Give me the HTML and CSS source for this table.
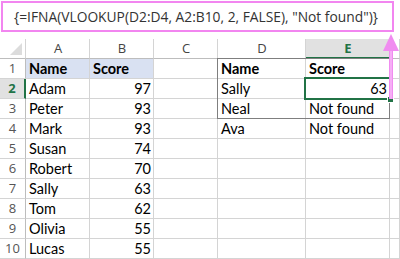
FILE: index.html
```html
<!DOCTYPE html>
<html lang="en">
<head>
    <meta charset="UTF-8" />
    <meta name="viewport" content="width=device-width, initial-scale=1.0" />
    <title>IFNA VLOOKUP</title>
    <link rel="stylesheet" href="styles.css">
</head>
<body>
    <div class="formula-bar">
        <div class="formula-box">{=IFNA(VLOOKUP(D2:D4, A2:B10, 2, FALSE), "Not found")}</div>
    </div>

    <div class="sheet">
        <div class="grid">
            <!-- column headers -->
            <div class="cell corner"><span class="corner-mark"></span></div>
            <div class="cell col-head">A</div>
            <div class="cell col-head">B</div>
            <div class="cell col-head">C</div>
            <div class="cell col-head">D</div>
            <div class="cell col-head active">E</div>
            <div class="cell col-head"></div>

            <div class="cell row-head">1</div>
            <div class="cell head-fill bold">Name</div>
            <div class="cell head-fill bold">Score</div>
            <div class="cell"></div>
            <div class="cell bold">Name</div>
            <div class="cell bold">Score</div>
            <div class="cell"></div>

            <div class="cell row-head active">2</div>
            <div class="cell">Adam</div>
            <div class="cell num">97</div>
            <div class="cell"></div>
            <div class="cell">Sally</div>
            <div class="cell num">63</div>
            <div class="cell"></div>

            <div class="cell row-head">3</div>
            <div class="cell">Peter</div>
            <div class="cell num">93</div>
            <div class="cell"></div>
            <div class="cell">Neal</div>
            <div class="cell">Not found</div>
            <div class="cell"></div>

            <div class="cell row-head">4</div>
            <div class="cell">Mark</div>
            <div class="cell num">93</div>
            <div class="cell"></div>
            <div class="cell">Ava</div>
            <div class="cell">Not found</div>
            <div class="cell"></div>

            <div class="cell row-head">5</div>
            <div class="cell">Susan</div>
            <div class="cell num">74</div>
            <div class="cell"></div>
            <div class="cell"></div>
            <div class="cell"></div>
            <div class="cell"></div>

            <div class="cell row-head">6</div>
            <div class="cell">Robert</div>
            <div class="cell num">70</div>
            <div class="cell"></div>
            <div class="cell"></div>
            <div class="cell"></div>
            <div class="cell"></div>

            <div class="cell row-head">7</div>
            <div class="cell">Sally</div>
            <div class="cell num">63</div>
            <div class="cell"></div>
            <div class="cell"></div>
            <div class="cell"></div>
            <div class="cell"></div>

            <div class="cell row-head">8</div>
            <div class="cell">Tom</div>
            <div class="cell num">62</div>
            <div class="cell"></div>
            <div class="cell"></div>
            <div class="cell"></div>
            <div class="cell"></div>

            <div class="cell row-head">9</div>
            <div class="cell">Olivia</div>
            <div class="cell num">55</div>
            <div class="cell"></div>
            <div class="cell"></div>
            <div class="cell"></div>
            <div class="cell"></div>

            <div class="cell row-head">10</div>
            <div class="cell">Lucas</div>
            <div class="cell num">55</div>
            <div class="cell"></div>
            <div class="cell"></div>
            <div class="cell"></div>
            <div class="cell"></div>
        </div>

        <!-- outline round D1:E4 and the selected cell E2 -->
        <div class="range-outline"></div>
        <div class="active-cell"><span class="fill-handle"></span></div>
    </div>

    <!-- arrow from E2 up to the formula -->
    <svg class="arrow" width="20" height="66" viewBox="0 0 20 66">
        <rect x="8" y="17" width="4" height="49" fill="#f08cf0" />
        <rect x="9.5" y="17" width="1" height="49" fill="#fbd0fb" />
        <polygon points="10,1 2,18 18,18" fill="#f08cf0" />
    </svg>
</body>
</html>
```

FILE: styles.css
```css
body {
    margin: 0;
    position: relative;
    background-color: #fff;
    font-family: "Open Sans", "Noto Sans", sans-serif;
    color: #000;
}

.formula-bar {
    height: 39px;
    padding: 1px 0 0 1px;
    box-sizing: border-box;
}

.formula-box {
    width: 393px;
    height: 31px;
    box-sizing: border-box;
    border: 2px solid #f286f0;
    padding-left: 11px;
    font-size: 13.8px;
    line-height: 27px;
    color: #333;
    white-space: nowrap;
}

.sheet {
    position: relative;
}

.grid {
    display: grid;
    grid-template-columns: 26px 64px 64px 64px 88px 84px 1fr;
    grid-auto-rows: 20px;
}

.cell {
    box-sizing: border-box;
    border-right: 1px solid #d4d4d4;
    border-bottom: 1px solid #d4d4d4;
    padding: 0 2px 0 3px;
    font-family: "Lato", "Open Sans", sans-serif;
    font-size: 14.5px;
    line-height: 19px;
    white-space: nowrap;
    overflow: hidden;
}

.bold {
    font-weight: bold;
}

.num {
    text-align: right;
}

.head-fill {
    background-color: #d9e1f2;
}

.col-head {
    text-align: center;
    color: #444;
    font-family: "Open Sans", sans-serif;
    font-size: 13px;
    border-bottom-color: #bdbdbd;
}

.col-head.active {
    background-color: #e1e1e1;
    color: #217346;
    font-weight: bold;
    border-bottom: 2px solid #217346;
}

.corner {
    position: relative;
    border-bottom-color: #bdbdbd;
}

.corner-mark {
    position: absolute;
    right: 3px;
    bottom: 3px;
    width: 0;
    height: 0;
    border-left: 12px solid transparent;
    border-bottom: 12px solid #dcdcdc;
}

.row-head {
    text-align: center;
    padding: 0;
    color: #555;
    font-family: "Open Sans", sans-serif;
    font-size: 13px;
    border-right-color: #bdbdbd;
}

.row-head.active {
    background-color: #e1e1e1;
    color: #217346;
    font-weight: bold;
    border-right: 2px solid #217346;
}

.range-outline {
    position: absolute;
    left: 217px;
    top: 19px;
    width: 173px;
    height: 61px;
    box-sizing: border-box;
    border: 1px solid #7f7f7f;
}

.active-cell {
    position: absolute;
    left: 304px;
    top: 38px;
    width: 87px;
    height: 23px;
    box-sizing: border-box;
    border: 2px solid #217346;
}

.fill-handle {
    position: absolute;
    right: -5px;
    bottom: -5px;
    width: 5px;
    height: 5px;
    background-color: #217346;
    border: 1px solid #fff;
}

.arrow {
    position: absolute;
    left: 381px;
    top: 33px;
}
```
